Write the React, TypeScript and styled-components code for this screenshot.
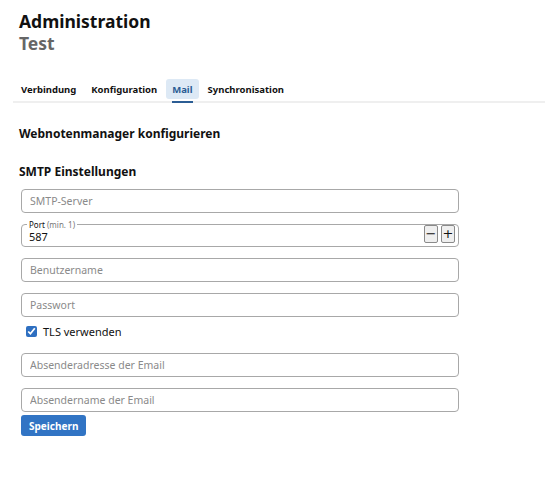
import { useState } from 'react';
import styled, { createGlobalStyle } from 'styled-components';

const GlobalStyle = createGlobalStyle`
  body {
    margin: 0;
    background: #fff;
    font-family: 'Noto Sans', 'Open Sans', sans-serif;
    color: #111;
  }
`;

const Page = styled.div`
  padding: 10px 0 0 0;
`;

const Header = styled.header`
  padding-left: 19px;
  display: flex;
  flex-direction: column;
`;

const Title = styled.h1<{ $muted?: boolean }>`
  margin: 0;
  font-size: 17.5px;
  line-height: 22px;
  font-weight: 700;
  color: ${(p) => (p.$muted ? '#666' : '#111')};
`;

const TabBar = styled.nav`
  display: flex;
  gap: 3px;
  margin: 25px 0 0 13px;
  padding-left: 2px;
  border-bottom: 2px solid #efefef;
`;

const Tab = styled.button<{ $active?: boolean }>`
  position: relative;
  border: none;
  margin: 0 0 2px;
  padding: 0 6px;
  height: 20px;
  border-radius: 3px;
  background: ${(p) => (p.$active ? '#dde9f5' : 'transparent')};
  color: ${(p) => (p.$active ? '#2b5d94' : '#111')};
  font-family: inherit;
  font-size: 9.5px;
  font-weight: 700;
  cursor: pointer;

  &::after {
    content: '';
    display: ${(p) => (p.$active ? 'block' : 'none')};
    position: absolute;
    left: 6px;
    right: 6px;
    bottom: -4px;
    height: 2px;
    background: #2b5d94;
  }
`;

const Content = styled.main`
  padding: 23px 0 0 19px;
`;

const SectionTitle = styled.h2`
  margin: 0;
  font-size: 12px;
  line-height: 16px;
  font-weight: 700;
`;

const SubTitle = styled(SectionTitle)`
  margin-top: 22px;
`;

const Form = styled.form`
  display: flex;
  flex-direction: column;
  width: 438px;
  margin: 9px 0 0 2px;
`;

const TextInput = styled.input`
  box-sizing: border-box;
  width: 100%;
  height: 24px;
  margin-bottom: 11px;
  padding: 0 8px;
  border: 1px solid #a8a8a8;
  border-radius: 4px;
  font-family: inherit;
  font-size: 10.5px;
  color: #111;
  outline: none;

  &::placeholder {
    color: #8a8a8a;
  }
`;

const NumberField = styled.fieldset`
  box-sizing: border-box;
  display: flex;
  align-items: center;
  height: 27px;
  margin: -4px 0 11px;
  padding: 0 3px 0 7px;
  border: 1px solid #a8a8a8;
  border-radius: 4px;
  min-width: 0;
`;

const Legend = styled.legend`
  padding: 0 2px;
  margin-left: -2px;
  font-size: 8px;
  line-height: 9px;
  color: #111;

  span {
    color: #777;
  }
`;

const NumberValue = styled.input`
  flex: 1;
  border: none;
  outline: none;
  padding: 0;
  margin-top: 0;
  font-family: inherit;
  font-size: 11px;
  color: #111;
  background: transparent;
`;

const StepButton = styled.button`
  box-sizing: border-box;
  display: flex;
  align-items: center;
  justify-content: center;
  width: 14px;
  height: 18px;
  margin: -6px 0 0 3px;
  padding: 0;
  border: 1px solid #8a8a8a;
  border-radius: 2px;
  background: #efefef;
  color: #111;
  font-family: 'DejaVu Sans', sans-serif;
  font-size: 13px;
  line-height: 1;
`;

const CheckRow = styled.label`
  display: flex;
  align-items: center;
  gap: 6px;
  margin: -5px 0 14px 5px;
  font-size: 11px;
  height: 16px;
`;

const CheckBox = styled.input`
  margin: 0;
  width: 11px;
  height: 11px;
  accent-color: #2e6fc1;
`;

const SaveButton = styled.button`
  align-self: flex-start;
  height: 21px;
  margin-top: -8px;
  padding: 0 8px;
  border: none;
  border-radius: 3px;
  background: #3174c4;
  color: #fff;
  font-family: inherit;
  font-size: 10px;
  font-weight: 700;
  cursor: pointer;
`;

const tabs = ['Verbindung', 'Konfiguration', 'Mail', 'Synchronisation'];

export default function App() {
  const [active, setActive] = useState('Mail');
  const [port, setPort] = useState(587);
  const [tls, setTls] = useState(true);

  return (
    <Page>
      <GlobalStyle />
      <Header>
        <Title>Administration</Title>
        <Title $muted>Test</Title>
      </Header>
      <TabBar>
        {tabs.map((t) => (
          <Tab key={t} $active={t === active} onClick={() => setActive(t)}>
            {t}
          </Tab>
        ))}
      </TabBar>
      <Content>
        <SectionTitle>Webnotenmanager konfigurieren</SectionTitle>
        <SubTitle>SMTP Einstellungen</SubTitle>
        <Form onSubmit={(e) => e.preventDefault()}>
          <TextInput placeholder="SMTP-Server" />
          <NumberField>
            <Legend>
              Port <span>(min. 1)</span>
            </Legend>
            <NumberValue value={port} readOnly />
            <StepButton type="button" onClick={() => setPort((p) => Math.max(1, p - 1))}>
              −
            </StepButton>
            <StepButton type="button" onClick={() => setPort((p) => p + 1)}>
              +
            </StepButton>
          </NumberField>
          <TextInput placeholder="Benutzername" />
          <TextInput type="password" placeholder="Passwort" />
          <CheckRow>
            <CheckBox type="checkbox" checked={tls} onChange={() => setTls(!tls)} />
            TLS verwenden
          </CheckRow>
          <TextInput placeholder="Absenderadresse der Email" />
          <TextInput placeholder="Absendername der Email" />
          <SaveButton type="submit">Speichern</SaveButton>
        </Form>
      </Content>
    </Page>
  );
}
